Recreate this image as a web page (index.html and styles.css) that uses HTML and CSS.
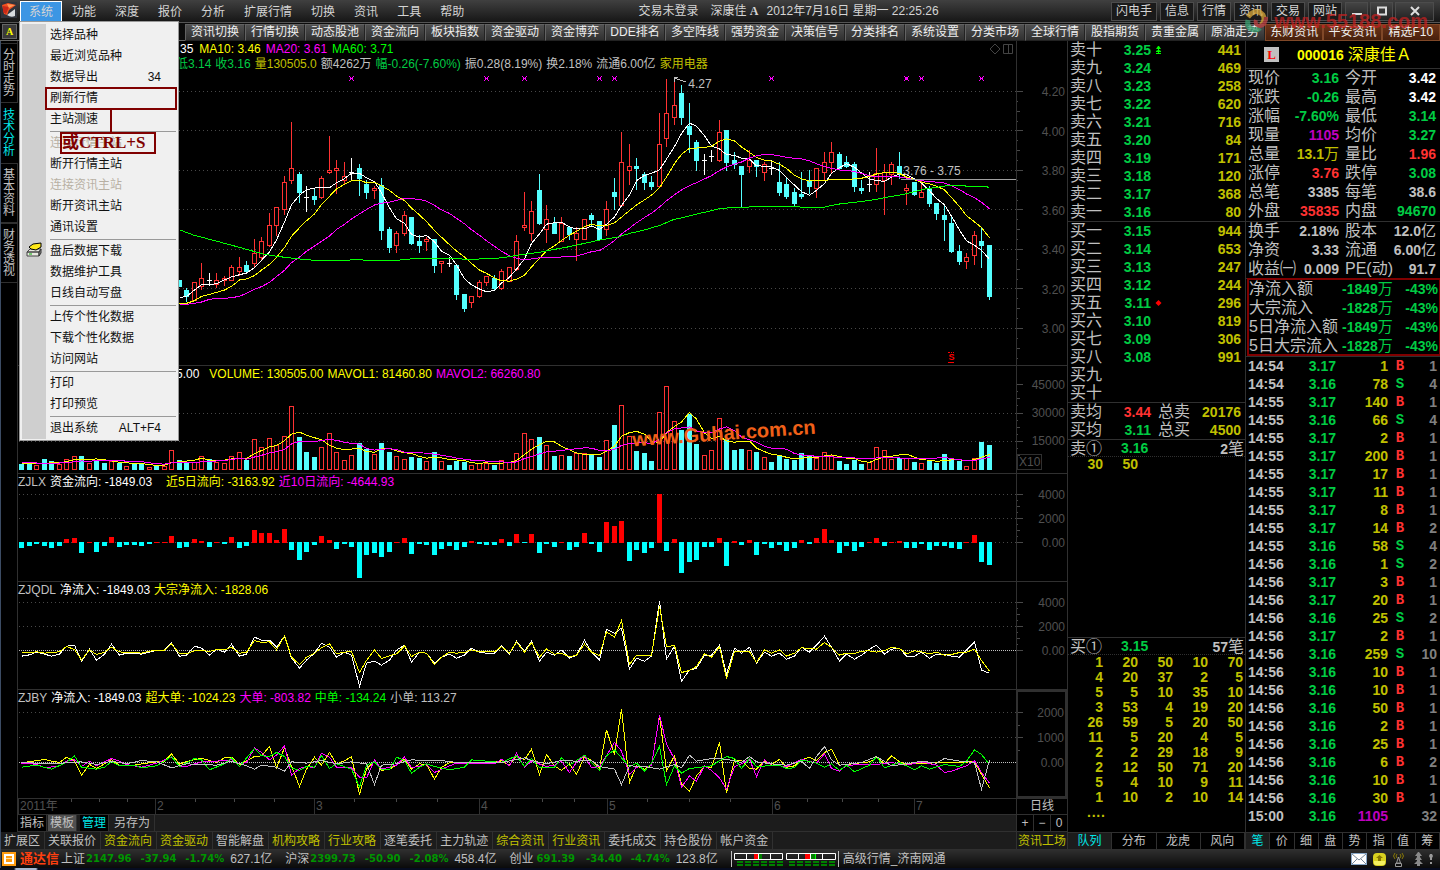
FILE: index.html
```html
<!DOCTYPE html>
<html lang="zh-CN">
<head>
<meta charset="utf-8">
<title>深康佳A 000016</title>
<link rel="stylesheet" href="styles.css">
</head>
<body>
<header class="titlebar">
  <svg class="app-logo" viewBox="0 0 16 16"><rect width="16" height="16" fill="#30343c"/><path d="M6 13L14 7V14Q10 16 6 13Z" fill="#d8dcdf"/><path d="M1 3L7 1L15 3L8 8L6 13L3 12Z" fill="#f05020"/><path d="M2 4L8 5L5 12L2 10Z" fill="#c82818"/><path d="M6 2L14 3L8 6Z" fill="#ff9858"/></svg>
  <nav class="menubar">
    <button class="menu-btn is-open">系统</button><button class="menu-btn">功能</button><button class="menu-btn">深度</button><button class="menu-btn">报价</button><button class="menu-btn">分析</button><button class="menu-btn">扩展行情</button><button class="menu-btn">切换</button><button class="menu-btn">资讯</button><button class="menu-btn">工具</button><button class="menu-btn">帮助</button>
  </nav>
  <div class="title-text"><span class="login">交易未登录</span><span>深康佳 <b>A</b></span><span>2012年7月16日 星期一 22:25:26</span></div>
  <div class="title-actions">
    <button class="quick">闪电手</button><button class="quick">信息</button><button class="quick">行情</button><button class="quick">资讯</button><button class="quick">交易</button><button class="quick">网站</button>
    <button class="win" aria-label="最小化"><svg viewBox="0 0 12 12"><path d="M1 8h10v2H1z" fill="#ddd"/></svg></button>
    <button class="win" aria-label="最大化"><svg viewBox="0 0 12 12"><path d="M2 2.500h8v7H2z" fill="none" stroke="#ddd" stroke-width="2"/></svg></button>
    <button class="win win-close" aria-label="关闭"><svg viewBox="0 0 12 12"><path d="M2 2l8 8M10 2l-8 8" stroke="#ddd" stroke-width="2"/></svg></button>
  </div>
</header>
<div class="toolbar">
  <button class="tool-a">A</button>
  <div class="tools">
    <button>资讯切换</button><button>行情切换</button><button>动态股池</button><button>资金流向</button><button>板块指数</button><button>资金驱动</button><button>资金博弈</button><button>DDE排名</button><button>多空阵线</button><button>强势资金</button><button>决策信号</button><button>分类排名</button><button>系统设置</button><button>分类市场</button><button>全球行情</button><button>股指期货</button><button>贵重金属</button><button>原油走势</button>
  </div>
  <div class="tools tools-hot"><button>东财资讯</button><button>平安资讯</button><button>精选F10</button></div>
</div>

<main class="workspace">
  <section class="left">
    <div class="left-body">
      <nav class="side-tabs">
        <button>分时走势</button><button class="is-active">技术分析</button><button>基本资料</button><button>财务透视</button>
      </nav>
      <div class="charts">
        <div class="panel panel-price">
          <svg class="plot" id="price" viewBox="0 0 998 324" preserveAspectRatio="none"></svg>
          <div class="head head-price">
            <p class="line-ma"><span class="w">35</span><span class="y">MA10: 3.46</span><span class="m">MA20: 3.61</span><span class="g">MA60: 3.71</span></p>
            <p class="line-info"><span class="dg">低3.14</span><span class="dg">收3.16</span><span class="dy">量130505.0</span><span>额4262万</span><span class="dg">幅-0.26(-7.60%)</span><span>振0.28(8.19%)</span><span>换2.18%</span><span>流通6.00亿</span><span class="dy">家用电器</span></p>
          </div>
          <svg class="panel-icons" viewBox="0 0 26 12"><path d="M6 1l5 5-5 5-5-5zM14.500 1.500h9v9h-9zM19.500 1.500v9" fill="none" stroke="#444"/></svg>
          <span class="note note-high">4.27</span>
          <span class="note note-gap">3.76 - 3.75</span>
          <span class="note note-s">S</span>
          <div class="axis"><span>4.20</span><span>4.00</span><span>3.80</span><span>3.60</span><span>3.40</span><span>3.20</span><span>3.00</span></div>
        </div>
        <div class="panel panel-vol">
          <svg class="plot" id="volume" viewBox="0 0 998 107" preserveAspectRatio="none"></svg>
          <div class="head head-vol"><span class="w">5.00</span><span class="y">VOLUME: 130505.00</span><span class="y">MAVOL1: 81460.80</span><span class="m">MAVOL2: 66260.80</span></div>
          <span class="guhai">www.Guhai.com.cn</span>
          <div class="axis"><span>45000</span><span>30000</span><span>15000</span><span class="unit">X10</span></div>
        </div>
        <div class="panel panel-flow">
          <svg class="plot" id="flow" viewBox="0 0 998 107" preserveAspectRatio="none"></svg>
          <div class="head"><span>ZJLX</span><span class="w wide">资金流向: -1849.03</span><span class="y">近5日流向: -3163.92</span><span class="m">近10日流向: -4644.93</span></div>
          <div class="axis"><span>4000</span><span>2000</span><span>0.00</span></div>
        </div>
        <div class="panel panel-flow">
          <svg class="plot" id="big" viewBox="0 0 998 107" preserveAspectRatio="none"></svg>
          <div class="head"><span>ZJQDL</span><span class="w">净流入: -1849.03</span><span class="y">大宗净流入: -1828.06</span></div>
          <div class="axis"><span>4000</span><span>2000</span><span>0.00</span></div>
        </div>
        <div class="panel panel-orders">
          <svg class="plot" id="orders" viewBox="0 0 998 108" preserveAspectRatio="none"></svg>
          <div class="head"><span>ZJBY</span><span class="w">净流入: -1849.03</span><span class="y">超大单: -1024.23</span><span class="m">大单: -803.82</span><span class="g">中单: -134.24</span><span>小单: 113.27</span></div>
          <div class="axis axis-boxed"><span>2000</span><span>1000</span><span>0.00</span></div>
        </div>
        <div class="timeline">
          <svg class="plot" id="ticks" viewBox="0 0 998 15" preserveAspectRatio="none"></svg>
          <div class="months"><span>2011年</span><span>2</span><span>3</span><span>4</span><span>5</span><span>6</span><span>7</span></div>
          <button class="period">日线</button>
        </div>
        <div class="indicator-bar">
          <div class="indicator-tabs"><button>指标</button><button class="is-grey">模板</button><button class="is-cyan">管理</button><button class="save">另存为</button></div>
          <div class="zoomers"><button>+</button><button>−</button><button>0</button></div>
        </div>
      </div>
    </div>
    <div class="page-bar">
      <nav class="page-tabs"><button>扩展区</button><button>关联报价</button><button class="dy">资金流向</button><button class="dy">资金驱动</button><button>智能解盘</button><button class="dy">机构攻略</button><button class="dy">行业攻略</button><button>逐笔委托</button><button>主力轨迹</button><button class="dy">综合资讯</button><button class="dy">行业资讯</button><button>委托成交</button><button>持仓股份</button><button>帐户资金</button></nav>
      <button class="factory">资讯工场</button>
    </div>
  </section>

  <section class="book">
    <table class="levels" id="asks"></table>
    <table class="levels ruled" id="bids"></table>
    <table class="averages ruled">
      <tr><th>卖均</th><td class="red">3.44</td><th class="second">总卖</th><td>20176</td></tr>
      <tr><th>买均</th><td class="dg">3.11</td><th class="second">总买</th><td>4500</td></tr>
    </table>
    <div class="queue-head ruled"><span>卖①</span><b class="dg">3.16</b><span class="count"><b>2</b>笔</span></div>
    <table class="queue"><tr><td>30</td><td>50</td><td></td><td></td><td></td></tr></table>
    <div class="filler"></div>
    <div class="queue-head ruled"><span>买①</span><b class="dg">3.15</b><span class="count"><b>57</b>笔</span></div>
    <table class="queue" id="bidQueue"></table>
    <div class="more">····</div>
    <nav class="bottom-tabs"><button class="is-active">队列</button><button>分布</button><button>龙虎</button><button>风向</button></nav>
  </section>

  <section class="quote">
    <h1><span class="flag">L</span><b>000016</b><span>深康佳Ａ</span></h1>
    <table class="facts ruled" id="facts"></table>
    <table class="facts ruled" id="facts2"></table>
    <div class="flow-wrap ruled"><table class="inflow">
      <tr><th>净流入额</th><td>-1849<i>万</i></td><td>-43%</td></tr>
      <tr><th>大宗流入</th><td>-1828<i>万</i></td><td>-43%</td></tr>
      <tr><th>5日净流入额</th><td>-1849<i>万</i></td><td>-43%</td></tr>
      <tr><th>5日大宗流入</th><td>-1828<i>万</i></td><td>-43%</td></tr>
    </table></div>
    <table class="trades ruled" id="trades"></table>
    <nav class="bottom-tabs bottom-tabs-narrow"><button class="is-active">笔</button><button>价</button><button>细</button><button>盘</button><button>势</button><button>指</button><button>值</button><button>筹</button></nav>
  </section>
</main>

<footer class="status">
  <svg class="status-logo" viewBox="0 0 14 14"><rect width="14" height="14" fill="#ff9c10"/><rect x="3" y="3" width="8" height="8" fill="none" stroke="#fff" stroke-width="2"/><path d="M4 6.500h6" stroke="#ffe0a0"/></svg>
  <strong class="brand">通达信</strong>
  <p class="index"><span>上证</span><b>2147.96</b><b>-37.94</b><b>-1.74%</b><span class="amount">627.1亿</span></p>
  <p class="index"><span>沪深</span><b>2399.73</b><b>-50.90</b><b>-2.08%</b><span class="amount">458.4亿</span></p>
  <p class="index"><span>创业</span><b class="narrow">691.39</b><b>-34.40</b><b>-4.74%</b><span class="amount">123.8亿</span></p>
  <svg class="gauge" viewBox="0 0 104 16"><g fill="none" stroke="#fff"><path d="M1.500 2.500h48v6h-48zM13.500 2v6M25.500 2v6M37.500 2v6M53.500 2.500h49v6h-49zM65.500 2v6M77.500 2v6M89.500 2v6"/></g><path d="M21 3h4v5h-4zM72 3h5v5h-5z" fill="#f00"/><path d="M26 3h3v5h-3zM78 3h4v5h-4z" fill="#008000"/><path d="M82 3h1v5h-1z" fill="#0f0"/><path d="M4 11h46M4 14h46M56 11h47M56 14h47" stroke="#008000" stroke-width="2" stroke-dasharray="6 2"/></svg>
  <span class="server">高级行情_济南网通</span>
  <div class="tray">
    <svg width="16" height="12" viewBox="0 0 16 12"><rect x=".5" y=".5" width="15" height="11" fill="#fff" stroke="#88a8c8"/><path d="M1 1l7 6 7-6M1 11l5-5M15 11l-5-5" fill="none" stroke="#789"/></svg>
    <svg width="13" height="13" viewBox="0 0 13 13"><rect width="13" height="13" rx="4" fill="#d8d020"/><path d="M1 8v2q0 2 3 2h5q3 0 3-2V8" fill="#f4f060"/><path d="M6.500 2L10 5H8v3H5V5H3z" fill="#887800"/></svg>
    <svg width="13" height="17" viewBox="0 0 13 17"><path d="M3 2Q0 5 3 8M5 3Q3 5 5 7M10 2q3 3 0 6M8 3q2 2 0 4" fill="none" stroke="#887808"/><path d="M6.500 6L4.500 12h4zM3.500 12.500h6v3h-6z" fill="none" stroke="#999"/></svg>
    <svg width="9" height="14" viewBox="0 0 9 14"><path d="M4 0h1l3 4H6v1l2 3H6v1l3 3H6v2H3v-2H0l3-3V8H1l2-3V4H1z" fill="#8a8a8a"/></svg>
    <svg width="4" height="10" viewBox="0 0 4 10"><path d="M1 0h2l1 2-1 2v2H1V4L0 2zM1 8h2v2H1z" fill="#999"/></svg>
  </div>
</footer>
<div class="taskbar"></div>

<div class="menu" role="menu">
  <div class="menu-gutter"><svg class="disk" viewBox="0 0 16 16"><path d="M1 10l3-3h11l-2 3zM1 10h12v4H1z" fill="#e8e8e0" stroke="#444"/><path d="M13 10l2-3v4l-2 3z" fill="#888" stroke="#333"/><path d="M3 5l4-3 8-1v4L10 8 5 7z" fill="#ffe818" stroke="#000"/><path d="M3 12h3" stroke="#0a0"/></svg></div>
  <div class="menu-list">
    <button role="menuitem">选择品种</button>
    <button role="menuitem">最近浏览品种</button>
    <button role="menuitem">数据导出<kbd>34</kbd></button>
    <button role="menuitem" class="marked">刷新行情</button>
    <button role="menuitem">主站测速</button>
    <hr>
    <button role="menuitem" class="off" disabled>连接行情主站</button>
    <button role="menuitem">断开行情主站</button>
    <button role="menuitem" class="off" disabled>连接资讯主站</button>
    <button role="menuitem">断开资讯主站</button>
    <button role="menuitem">通讯设置</button>
    <hr>
    <button role="menuitem">盘后数据下载</button>
    <button role="menuitem">数据维护工具</button>
    <button role="menuitem">日线自动写盘</button>
    <hr>
    <button role="menuitem">上传个性化数据</button>
    <button role="menuitem">下载个性化数据</button>
    <button role="menuitem">访问网站</button>
    <hr>
    <button role="menuitem">打印</button>
    <button role="menuitem">打印预览</button>
    <hr>
    <button role="menuitem">退出系统<kbd>ALT+F4</kbd></button>
  </div>
  <span class="callout-line"></span>
  <span class="callout">或CTRL+S</span>
</div>

<div class="watermark">
  <svg viewBox="0 0 26 26" fill="none" stroke-width="5"><path d="M4 9Q12-1 19 7Q22 12 17 17" stroke="#d8a838"/><path d="M4 12Q2 21 11 22Q14 22 16 20" stroke="#38a070"/><path d="M12 12Q10 17 16 18Q22 17 22 9" stroke="#c04040" stroke-width="4"/></svg>
  <span>www.55188.com</span>
</div>
<script src="chart.js"></script>
</body>
</html>
```

FILE: styles.css
```css
* { box-sizing: border-box; }
body {
  margin: 0; min-height: 100vh; display: flex; flex-direction: column; position: relative;
  background: #000; color: #c0c0c0; overflow-x: hidden;
  font: 12px/16px "Liberation Sans", "Noto Sans CJK SC", sans-serif;
}
button { font: inherit; color: inherit; background: none; border: 0; padding: 0; margin: 0; white-space: nowrap; text-align: center; }
p, h1 { margin: 0; font-size: inherit; font-weight: normal; }
table { border-collapse: collapse; table-layout: fixed; width: 100%; }
th, td { padding: 0; }
svg { display: block; }

.w { color: #fff; }
.y { color: #ff0; }
.m { color: #f0f; }
.g { color: #0f0; }
.dg { color: #00cc44; }
.dy { color: #c0c000; }
.red { color: #ff3232; }
.purple { color: #c000c0; }

/* title bar */
.titlebar { display: flex; align-items: center; height: 22px; background: linear-gradient(#404040, #161616); color: #d4d4d4; }
.app-logo { width: 16px; height: 16px; margin: 0 3px 3px 1px; }
.menubar { display: flex; align-self: stretch; }
.menu-btn { padding: 2px 9px 0; margin-right: 1px; height: 21px; }
.menu-btn.is-open { background: #3c96e4; border: 1px solid #fff; border-bottom: 0; padding: 1px 8px 0; margin-top: 1px; height: 20px; }
.title-text { display: flex; gap: 8px; flex: 1; justify-content: center; white-space: nowrap; padding-right: 8px; }
.login { margin-right: 4px; }
.title-text b { font-family: "Liberation Serif", serif; }
.title-actions { display: flex; gap: 2px; padding-right: 6px; }
.quick { height: 19px; padding: 0 4px; border: 1px solid #4c4c4c; background: #1a1a1a; margin-right: 1px; }
.win { width: 23px; height: 19px; display: grid; place-items: center; border: 1px solid #4c4c4c; background: linear-gradient(#444, #222); }
.win svg { width: 12px; height: 12px; }
.win-close { width: 39px; }

/* shortcut bar */
.toolbar { display: flex; align-items: stretch; height: 19px; padding: 1px 0 1px 2px; background: #0c0c0c; border-top: 1px solid #555; border-bottom: 1px solid #666; color: #eee; }
.tool-a { width: 15px; margin-right: 168px; background: #3a3a3a; border: 1px solid #666; color: #ff0; font: bold 10px/12px "Liberation Serif", serif; }
.tools { display: grid; grid-auto-flow: column; grid-auto-columns: 1fr; flex: 1080; }
.tools button { line-height: 15px; background: linear-gradient(#505050, #303030); border: 1px solid #626262; border-right-color: #222; border-bottom-color: #222; }
.tools-hot { flex: 175; }
.tools-hot button { background: linear-gradient(#6c3418, #48200c); border-color: #804828; }

.workspace { flex: 1; display: grid; grid-template-columns: minmax(0, 1068fr) 178px 194px; }
.left { display: flex; flex-direction: column; min-width: 0; border-left: 1px solid #3c4c64; border-right: 1px solid #303030; }
.left-body { flex: 1; display: flex; min-height: 0; }

.side-tabs { width: 17px; border-right: 1px solid #303030; display: flex; flex-direction: column; padding-top: 2px; }
.side-tabs button { white-space: normal; width: 17px; height: 60px; padding: 0 2px; line-height: 12px; border: 1px solid #303030; border-left: 0; }
.side-tabs .is-active { color: #00e8e8; border-color: #000; }

/* chart panels */
.charts { flex: 1; min-width: 0; display: grid; grid-template-rows: 325fr 108fr 108fr 108fr 109fr 16px 17px; }
.panel { display: grid; position: relative; grid-template: minmax(0, 1fr) / minmax(0, 1fr) 51px; border-bottom: 1px solid #303030; min-height: 0; }
.plot { grid-area: 1 / 1; width: 100%; height: 100%; min-height: 0; overflow: visible; shape-rendering: crispEdges; }
.head { grid-area: 1 / 1; display: flex; gap: 4px; z-index: 1; white-space: nowrap; height: 16px; }
.head-price { display: block; }
.head-price p { display: flex; gap: 4px; height: 15px; }
.line-ma { padding-left: 162px; }
.line-ma span:first-child { margin-right: 2px; }
.line-ma span { margin-right: 1px; }
.line-info { padding-left: 158px; }
.head-vol { padding-left: 158px; }
.head-vol span:first-child { margin-right: 6px; }
.wide { margin-right: 10px; }
.axis { grid-area: 1 / 2; border-left: 1px solid #303030; display: flex; flex-direction: column; justify-content: space-between; align-items: flex-end; padding-right: 2px; color: #505050; line-height: 14px; }
.panel-price .axis { padding-top: 44px; padding-bottom: 29px; }
.panel-vol .axis { padding-top: 12px; padding-bottom: 3px; }
.panel-flow .axis { padding-top: 14px; padding-bottom: 31px; }
.panel-orders .axis { padding-top: 14px; padding-bottom: 26px; }
.axis-boxed { border: 2px solid #303030; padding-right: 1px; }
.unit { align-self: flex-start; border: 1px solid #303030; padding: 0 1px; margin-top: -8px; }
.panel-icons { position: absolute; top: 2px; right: 52px; width: 26px; height: 12px; }
.note { position: absolute; line-height: 14px; }
.note-high { left: 63.900%; top: 11%; }
.note-gap { left: 84.400%; top: 38%; }
.note-s { left: 88.700%; top: 96%; color: #f00; font: bold 9px/9px "Liberation Sans", sans-serif; border-bottom: 1px solid #f00; border-top: 1px dotted #f00; }
.guhai { position: absolute; left: 58.500%; top: 51%; color: #f06018; font: bold 20px/24px "Liberation Sans", sans-serif; transform: rotate(-4deg); z-index: 2; }

.timeline { display: grid; grid-template: minmax(0, 1fr) / minmax(0, 1fr) 51px; border-bottom: 1px solid #303030; line-height: 15px; }
.months { grid-area: 1 / 1; display: grid; grid-template-columns: 137fr 159fr 165fr 128fr 165fr 142fr 102fr; color: #505050; }
.months span { border-left: 1px solid #303030; padding-left: 1px; }
.period { border-left: 1px solid #303030; line-height: 15px; }
.indicator-bar { display: grid; grid-template-columns: minmax(0, 1fr) 51px; border-bottom: 1px solid #303030; background: #1c1c1c; }
.indicator-tabs { display: flex; }
.indicator-tabs button { padding: 0 2px; border-right: 1px solid #303030; background: #000; margin-right: 1px; }
.indicator-tabs .is-grey { background: #505050; margin-right: 3px; }
.indicator-tabs .is-cyan { color: #00e8e8; }
.indicator-tabs .save { background: none; padding: 0 4px; }
.zoomers { display: grid; grid-template-columns: repeat(3, 1fr); background: #000; }
.zoomers button { border-left: 1px solid #303030; }

.page-bar { height: 17px; display: grid; grid-template-columns: minmax(0, 1fr) 51px; }
.page-tabs { display: flex; background: #1c1c1c; }
.page-tabs button { padding: 0 4px 0 3px; border-right: 1px solid #303030; }
.factory { background: #181818; border-left: 1px solid #303030; color: #c0c000; }

/* order book */
.book { display: flex; flex-direction: column; border-right: 1px solid #303030; }
.ruled { border-top: 1px solid #303030; }
.book th, .quote th { font: 16px/18px "Liberation Sans", "Noto Sans CJK SC", sans-serif; text-align: left; white-space: nowrap; }
.book td, .quote td { font-weight: bold; font-size: 14px; line-height: 18px; text-align: right; white-space: nowrap; }
.levels tr, .averages tr, .trades tr { height: 18px; }
.levels th, .averages th { padding-left: 2px; }
.levels td:last-child, .averages td:last-child { color: #c0c000; padding-right: 4px; }
.levels .l { width: 51px; }
.levels .p, .averages td:nth-child(2) { width: 32px; }
.averages th { width: 51px; }
.averages .second { width: 42px; padding-left: 7px; }
.levels .mark svg { width: 7px; height: 8px; margin-left: 4px; }
.queue-head { display: flex; height: 18px; padding: 0 1px 0 2px; font-size: 16px; line-height: 17px; border-bottom: 1px dotted #303030; white-space: nowrap; }
.queue-head b { font-size: 14px; }
.queue-head > b { margin-left: 19px; }
.count { margin-left: auto; }
.queue { width: 175px; }
.queue td { line-height: 15px; height: 15px; color: #c0c000; }
.filler { flex: 1; }
.more { height: 27px; padding-left: 19px; color: #c0c000; font: bold 14px/22px "Liberation Sans", sans-serif; }
.bottom-tabs { display: grid; grid-template-columns: repeat(4, 1fr); height: 17px; border-top: 1px solid #303030; }
.bottom-tabs button { border-right: 1px solid #303030; line-height: 16px; }
.bottom-tabs .is-active { color: #00e8e8; background: #1c1c1c; }
.bottom-tabs-narrow { grid-template-columns: repeat(8, 1fr); margin-top: auto; }

/* quote */
.quote { display: flex; flex-direction: column; min-width: 0; }
.quote h1 { height: 27px; display: flex; align-items: center; padding-left: 18px; color: #ff0; font-size: 16px; }
.quote h1 b { font-size: 14px; margin: 0 4px 0 18px; }
.flag { width: 15px; height: 15px; background: #c0c0c0; color: #f00; text-align: center; font: bold 13px/15px "Liberation Serif", serif; }
.facts tr, .inflow tr { height: 19px; }
.facts th { padding-left: 2px; width: 44px; }
.facts td { padding-right: 4px; }
.facts th:nth-child(3) { width: 46px; }
.facts i, .inflow i { font-style: normal; font-weight: normal; font-size: 15px; }
.facts .fcol { width: 53px; }
.flow-wrap { padding: 0 0 1px 2px; }
.inflow { outline: 2px solid #800000; outline-offset: -1px; }
.inflow th { width: 94px; padding-left: 1px; }
.inflow td { color: #00cc44; }
.inflow td:last-child { padding-right: 2px; }
.trades td:nth-child(1) { text-align: left; padding-left: 2px; width: 46px; }
.trades td:nth-child(2) { width: 44px; color: #00cc44; }
.trades td:nth-child(3) { width: 52px; color: #c0c000; }
.trades td:nth-child(4) { width: 20px; text-align: center; font-family: "Liberation Mono", monospace; padding-left: 4px; }
.trades td:nth-child(5) { color: #808080; padding-right: 3px; }
.trades td.purple:nth-child(3) { color: #c000c0; }
.trades .B { color: #ff3232; }
.trades .S { color: #00cc44; }

/* status */
.status { display: flex; align-items: center; height: 19px; padding-top: 1px; background: linear-gradient(#303030, #0a0a0a); white-space: nowrap; border-left: 1px solid #3c4c64; }
.status-logo { width: 14px; height: 14px; margin: 0 4px 0 1px; }
.brand { color: #ff4010; font-size: 13px; margin-right: 2px; }
.index { display: flex; align-items: center; margin-right: 13px; }
.index b { font: bold 10px/16px "DejaVu Sans", sans-serif; color: #009400; margin-right: 8px; margin-left: 1px; }
.index b:nth-of-type(3) { margin-right: 6px; }
.index .narrow { margin-left: 3px; margin-right: 10px; }
.gauge { width: 108px; height: 16px; border-left: 1px solid #c0c0c0; border-right: 1px solid #c0c0c0; padding: 0 1px; }
.server { padding-left: 4px; }
.tray { margin-left: auto; display: flex; align-items: center; gap: 6px; padding-right: 7px; }
.tray svg:nth-child(4) { margin-left: 3px; }
.taskbar { height: 2px; background: linear-gradient(90deg, #060c18 0 14px, #a8b8d0 16px 36px, #060c20 38px); }

/* system menu */
.menu { position: absolute; left: 19px; top: 21px; width: 160px; display: flex; padding: 2px 2px 1px; background: #f0f0f0; border: 1px solid #999; color: #111; font: 12px/21px "Liberation Sans", "Noto Sans CJK SC", sans-serif; z-index: 5; }
.menu-gutter { width: 24px; background: #cfcfcf; }
.disk { width: 16px; height: 16px; margin: 218px 0 0 4px; }
.menu-list { flex: 1; display: flex; flex-direction: column; padding-top: 1px; }
.menu-list button { display: flex; justify-content: space-between; height: 21px; line-height: 21px; padding: 0 15px 0 4px; }
.menu-list kbd { font: inherit; }
.menu-list hr { width: calc(100% - 4px); height: 1px; border: 0; background: #999; margin: 1px 0 1px 4px; }
.menu-list .off { color: #b8b0a4; }
.menu-list .marked { outline: 2px solid #800000; outline-offset: -1px; }
.callout-line { position: absolute; left: 90px; top: 87px; width: 2px; height: 24px; background: #800000; }
.callout { position: absolute; left: 40px; top: 110px; width: 96px; height: 22px; border: 2px solid #800000; color: #800000; font: bold 17px/17px "Liberation Serif", "Noto Sans CJK SC", serif; white-space: nowrap; }

.watermark { position: absolute; top: 8px; right: 12px; display: flex; align-items: center; gap: 4px; opacity: .75; pointer-events: none; color: #c02020; }
.watermark svg { width: 26px; height: 26px; }
.watermark span { font: bold 20px/24px "Liberation Sans", sans-serif; }
```

FILE: chart.js
```js
const NS = 'http://www.w3.org/2000/svg';
const RED = '#ff3232', CYAN = '#54ffff';
const LEFT = 18;

function add(svg, tag, attrs) {
  const el = document.createElementNS(NS, tag);
  for (const k in attrs) el.setAttribute(k, attrs[k]);
  svg.appendChild(el);
  return el;
}
const byId = id => document.getElementById(id);
const cx = i => Math.round(21 + 7.5 * i) - LEFT;
const rect = (svg, x, y, w, h, fill) => add(svg, 'rect', { x, y, width: w, height: h, fill });
const hollow = (svg, x, y, w, h) => add(svg, 'rect', { x: x + .5, y: y + .5, width: w - 1, height: Math.max(1, h - 1), fill: '#000', stroke: RED });
function line(svg, points, stroke) {
  add(svg, 'polyline', { points: points.map(p => p.join(',')).join(' '), fill: 'none', stroke });
}
function gridLine(svg, y, color = '#484848', dash = '1 3') {
  add(svg, 'path', { d: `M1 ${y + .5}H998`, stroke: color, 'stroke-dasharray': dash });
}
function ticks(svg, major, step) {
  major.forEach(y => {
    rect(svg, 998, y, 7, 1, '#484848');
    [1, 2, 3].forEach(k => rect(svg, 998, Math.round(y + step * k / 4), k === 2 ? 4 : 2, 1, '#484848'));
  });
}
const avg = (values, n, seed) => values.map((_, i) =>
  i < seed.length ? seed[i] : values.slice(i - n + 1, i + 1).reduce((a, b) => a + b, 0) / n);

/* kind, body top, body bottom, high, low; thirds of a pixel below y=60 */
const candles = `c660,680,660,680 c690,710,684,728 r667,721,667,721 r655,680,609,692 w661,661,639,680 r661,673,640,686 r655,661,649,680 r622,661,615,661 r622,634,591,650 c615,636,603,640
r580,610,537,622 r544,592,531,600 r496,556,459,562 r442,496,442,528 r367,448,348,467 r325,361,186,374 c342,398,336,431 w412,412,378,456 c408,419,387,437 r355,412,348,419
r331,338,228,344 r325,332,300,404 r349,362,306,372 w338,338,294,360 c324,356,312,410 c372,398,360,419 r385,391,378,419 c377,515,354,540 c507,563,501,581 r520,556,513,581
r466,520,453,528 c471,551,471,557 c543,557,525,581 r538,544,531,575 c537,617,537,641 r604,610,604,641 w610,610,591,623 c615,704,615,722 c702,746,702,758 r709,727,709,746
r667,709,660,716 r650,667,650,680 c654,686,645,690 r634,686,627,692 r622,664,622,667 r544,628,525,634 r496,502,396,515 r454,520,423,544 c390,491,342,497 r478,508,435,551
c489,521,471,521 r490,544,471,544 c501,524,501,540 r520,538,502,605 r478,538,478,538 c465,479,459,503 c483,540,483,540 r448,508,423,528 c396,410,354,450 r307,436,216,442
r319,331,252,375 c318,326,294,392 c342,368,336,392 c366,380,348,392 r253,380,159,386 r160,236,57,261 r136,173,57,195 c99,173,75,195 c198,224,129,279 c246,302,240,333
w301,301,282,345 w290,290,270,308 r217,301,180,308 c210,308,210,333 c300,314,276,327 c318,344,318,441 r301,319,270,339 c300,320,300,351 r313,338,307,363 w325,325,300,345
c366,398,306,410 c372,410,352,419 c396,431,384,441 c402,410,336,419 c360,380,330,404 r325,386,325,414 r307,337,276,363 r277,307,246,339 c282,326,276,326 c306,320,288,326
c312,380,306,398 c384,392,360,404 w373,373,336,398 r340,374,264,398 r338,361,312,467 r313,344,306,375 c318,344,276,357 r385,391,372,437 c366,404,366,410 r397,412,363,412
c387,431,378,443 c429,461,429,480 c465,480,435,545 c489,575,471,581 c573,605,555,617 r592,605,579,629 r526,587,513,617 c543,557,503,624 c555,710,555,722`
  .split(/\s+/).map(s => [s[0], ...s.slice(1).split(',').map(Number)]);
const FIRST = 21;

(function drawPrice() {
  const svg = byId('price');
  const y = v => v / 3 + 19, f = v => Math.floor(v / 3) + 19;
  const grid = [50, 89, 129, 168, 208, 247, 287];
  grid.forEach(g => gridLine(svg, g));
  ticks(svg, grid, 39.5);
  candles.forEach(([kind, top, bottom, high, low], k) => {
    const x = cx(k + FIRST);
    const color = { r: RED, c: CYAN, w: '#fff' }[kind];
    rect(svg, x, f(high), 1, Math.max(1, f(low) - f(high)), color);
    if (kind === 'r') hollow(svg, x - 2, f(top), 5, f(bottom) - f(top) + 1);
    else if (kind === 'c') rect(svg, x - 2, f(top), 5, Math.round((bottom - top) / 3), color);
    else rect(svg, x - 2, f(top), 5, 1, color);
  });
  const close = candles.map(c => c[0] === 'c' ? c[2] : c[1]);
  const pts = list => list.map((v, k) => [cx(k + FIRST) + .5, y(v)]);
  line(svg, pts(avg(close, 5, [712, 710, 690, 674])), '#fff');
  line(svg, pts(avg(close, 10, [731, 730, 722, 709, 703, 697, 690, 679, 660])), '#ff0');
  line(svg, pts(avg(close, 20, [733, 733, 730, 726, 718, 715, 715, 713, 709, 700, 688, 680, 667, 650, 631, 608, 591, 574, 558, 544])), '#f0f');
  const ma60 = [0,510,40,525,100,541,160,557,210,571,250,582,290,589,360,597,424,603,445,601,500,601,530,598,560,601,600,601,628,603,650,601,710,595,800,595,870,598,950,595,990,590,1010,586,1078,577,1102,572,1168,560,1260,540,1310,532,1350,520,1390,511,1440,496,1480,479,1520,470,1560,460,1615,447,1660,442,1700,442,1720,439,1840,439,1860,441,1935,441,1970,433,2040,425,2090,418,2120,412,2170,403,2230,388,2310,376,2350,376,2360,379,2415,379,2426,382];
  const g = [];
  for (let i = 0; i < ma60.length; i += 2) g.push([162 + ma60[i] / 3, y(ma60[i + 1])]);
  line(svg, g, '#0f0');
  [44, 62, 67, 77, 79, 100, 118, 120, 128].forEach(i => {
    const x = cx(i), m = '#f0f';
    [-2, -1, 1, 2].forEach(d => {
      rect(svg, x + d, 37 + d, 1, 1, m);
      rect(svg, x + d, 37 - d, 1, 1, m);
    });
    rect(svg, x - 1, 37, 3, 1, m);
    if (i === 118) rect(svg, x - 1, 36, 3, 3, m);
  });
  add(svg, 'path', { d: 'M656 37l12 4M656 36h4M656 37v4', stroke: '#c0c0c0', fill: 'none' });
  rect(svg, 883, 138, 115, 1, '#a0a0a0');
})();

const volumes = `17c 19c 14r 32c 26c 19r 34r 43r 41c 22r 26c 20c 28r 20c 13r 18c 18c 10r 11c 13r 61r 29c 20c 25r 43r 33c 25r 22r 43r 55r 30c 94r 70r 97r 76r 103r 193r 98c 53c 38c 70r 112r 55r 31r 46r 80c 62c 49r 80c 53c 43r 34r 38c 35c 28r 53c 28r 14c 27c 23c 16r 21r 21r 14c 31r 24r 52r 112r 94r 98c 76r 41c 46r 41c 52r 52r 46c 38c 91r 134c 196r 103r 56c 50c 26c 175r 253r 148r 119c 167c 77c 46r 61r 157r 94c 59c 62c 61r 53c 40r 23c 43c 32c 29c 50c 41c 37r 55r 44r 26c 17c 29c 17c 25r 70r 61r 34r 37c 37r 23c 22r 29c 20c 47c 32c 26c 13r 37r 83c 74c`.split(' ');
(function drawVolume() {
  const svg = byId('volume');
  const grid = [18, 47, 75];
  grid.slice(1).forEach(g => gridLine(svg, g));
  ticks(svg, grid, 28.5);
  const h = volumes.map(v => parseInt(v, 10));
  volumes.forEach((v, i) => {
    const tall = Math.max(2, Math.round(h[i] / 3));
    if (v.endsWith('r')) hollow(svg, cx(i) - 2, 104 - tall, 5, tall);
    else rect(svg, cx(i) - 2, 104 - tall, 5, tall, CYAN);
  });
  const pts = list => list.map((v, i) => [cx(i) + .5, 104 - v / 3]);
  line(svg, pts(avg(h, 5, [20, 20, 20, 20])), '#ff0');
  line(svg, pts(avg(h, 10, [22, 22, 21, 21, 21, 21, 22, 25, 27])), '#f0f');
})();

const net = [-17,-13,-5,-11,-17,-11,13,16,-32,4,-29,-11,19,-14,-8,-8,-11,-5,1,1,22,-17,-14,13,7,-14,4,-5,19,-17,-11,40,31,31,10,43,-23,-53,-29,-8,22,10,-20,-5,-14,-107,-38,-32,-44,-29,1,16,-35,-5,-8,-38,-20,-11,-23,-14,7,-5,-8,-8,13,-11,28,-2,28,-32,-5,-14,1,-23,-14,31,-5,-29,64,52,67,-56,-23,-32,-17,148,-26,13,-92,-59,-53,-14,-14,16,-71,7,-8,10,-38,-5,-17,-8,-26,-17,10,-5,16,43,10,-32,-11,-26,-14,4,16,-11,4,7,-17,-17,-5,-23,-11,-11,-17,-20,1,25,-59,-68];
const block = [-6,-6,-4,-8,-6,-4,12,3,-28,2,-12,-5,10,-4,-6,-6,-8,-2,0,1,20,-10,-10,-1,0,-3,3,2,10,-8,-5,30,24,26,2,44,-20,-42,-20,-8,8,20,-10,-5,-3,-66,-30,2,-24,-16,-10,14,-18,-5,-8,-42,-20,-5,-8,-6,2,-4,-4,-4,12,-8,25,-5,24,-20,5,-11,-8,-19,-14,19,-5,-15,56,40,90,-42,-14,-16,-14,132,11,15,-66,-60,-48,-10,-20,12,-84,-2,-2,-4,-36,2,-8,2,-17,-8,8,6,4,24,9,-14,-8,-9,-2,-1,-5,0,9,6,-10,-1,-4,-10,-5,-14,-12,-6,-5,4,-30,-62];

(function drawFlow() {
  const svg = byId('flow');
  const grid = [20, 44, 68];
  grid.forEach(g => gridLine(svg, g));
  ticks(svg, grid.slice(0, 2), 24);
  rect(svg, 998, 68, 7, 1, '#484848');
  net.forEach((v, i) => {
    const h = Math.max(1, Math.round(Math.abs(v) / 3));
    rect(svg, cx(i) - 2, v > 0 ? 69 - h : 68, 5, h, v > 0 ? '#f00' : '#0ff');
  });
})();

(function drawBig() {
  const svg = byId('big');
  [20, 44].forEach(g => gridLine(svg, g));
  gridLine(svg, 68, '#c0c0c0', '1 1');
  ticks(svg, [20, 44], 24);
  rect(svg, 998, 68, 7, 1, '#484848');
  const pts = list => list.map((v, i) => [cx(i) + .5, 68.5 - v / 3]);
  line(svg, pts(net), '#fff');
  line(svg, pts(block), '#ff0');
})();

(function drawOrders() {
  const svg = byId('orders');
  [22, 47].forEach(g => gridLine(svg, g));
  gridLine(svg, 72, '#c0c0c0', '1 1');
  ticks(svg, [22, 47], 25);
  const series = {
    '#ff0': '0:-1,3:9,4:4,5:0,6:16,7:5,8:-38,9:-6,10:-18,12:8,13:-9,15:-8,16:-4,18:2,19:4,20:26,21:-5,22:3,24:13,26:0,27:14,28:16,29:-6,30:5,31:18,32:20,33:48,34:-16,35:44,36:-10,37:-72,38:-20,39:16,40:-8,41:30,42:-4,43:5,44:18,45:-96,46:-20,47:4,48:-24,49:-20,50:-8,51:10,52:-20,53:-4,54:-6,55:-50,56:-15,57:0,60:0,62:-3,64:5,65:-8,66:20,67:8,68:40,69:-36,70:24,71:-10,72:-24,73:-4,74:-36,75:18,76:6,77:-18,78:98,79:24,80:160,81:-60,82:-10,83:-20,84:-8,85:140,86:-24,87:20,88:-64,89:-86,90:-40,91:-12,92:-16,93:60,94:-92,95:8,96:6,97:-18,98:-20,99:4,100:-5,101:9,102:-14,103:-10,104:8,105:16,106:6,107:30,108:40,109:-8,110:-6,113:2,114:14,115:-3,116:20,117:2,118:-5,119:-3,127:2,128:-36,129:-76',
    '#f0f': '0:-3,2:-5,3:-16,5:-10,6:4,7:8,8:-12,9:4,10:-10,12:12,13:4,14:-6,16:-14,18:-2,20:16,21:-10,22:-12,24:2,26:4,28:8,29:-4,30:0,31:44,32:30,33:8,34:22,35:50,36:-38,37:-18,38:-12,39:-16,40:28,41:16,42:-14,44:-16,45:-44,46:-46,47:8,48:-20,50:-8,51:16,52:-16,54:-6,55:-30,56:-20,58:-2,63:-4,64:10,65:-10,66:28,67:-14,68:4,70:-12,71:-8,72:4,73:-30,74:0,75:20,76:-16,77:-12,78:20,79:60,80:34,81:-36,82:-14,84:-10,85:142,86:56,87:10,88:-74,89:-40,90:-56,91:-10,92:-24,93:-46,94:-80,95:-12,96:-4,97:10,98:-42,99:8,100:-8,102:-12,104:10,106:-2,107:26,108:-18,109:-26,110:-8,114:-6,116:0,118:-8,120:2,122:-8,123:-30,124:-26,126:-10,127:6,128:-30,129:-62',
    '#0f0': '0:-14,2:-8,4:-20,6:0,7:20,8:-14,10:-20,11:-14,12:2,13:-10,15:-8,16:-16,18:-10,20:18,21:-12,23:12,24:8,25:-22,27:-4,28:14,29:-12,31:42,32:20,33:18,34:30,35:18,36:-16,37:-24,38:-12,39:-14,40:20,41:-18,42:-4,44:-20,45:-74,46:-8,47:2,48:-22,49:-22,50:16,51:6,52:-32,53:-14,54:-4,55:-12,57:-22,59:-14,60:8,62:4,64:0,66:20,67:-12,68:12,69:-16,71:-14,72:14,73:-8,75:22,77:-24,78:20,79:38,80:14,81:-12,82:-2,83:-26,84:-2,85:48,86:-66,87:-10,88:-32,89:-18,92:-10,94:18,95:12,96:-18,97:12,98:-12,101:-8,102:-18,103:-16,104:8,106:-2,107:-14,108:-4,109:-24,110:-8,111:-28,113:-8,114:18,115:-16,117:0,119:-22,120:-10,121:-20,123:-6,125:-12,126:4,127:38,128:24,129:-6',
    '#c0c0c0': '0:0,4:-4,8:2,10:-6,12:4,14:-4,16:6,18:2,20:-16,22:-4,24:-6,26:-8,28:4,30:-10,31:-20,32:-8,34:-14,35:-26,36:2,38:-2,40:6,42:-4,44:2,46:-4,47:-66,48:-8,50:-4,52:8,54:6,56:6,58:0,64:0,67:14,68:6,70:-4,72:6,74:4,76:6,77:-12,79:-20,80:-66,81:-10,83:-12,85:-20,87:-6,88:-16,89:22,90:4,92:12,94:10,96:0,97:18,98:2,100:-4,102:-8,104:4,105:-18,106:18,107:48,108:8,109:-8,112:0,114:18,116:-10,118:-4,120:4,122:-2,123:12,125:4,127:0,128:-80,129:8'
  };
  for (const color in series) {
    line(svg, series[color].split(',').map(p => {
      const [i, v] = p.split(':').map(Number);
      return [cx(i) + .5, 72.5 - v / 3];
    }), color);
  }
})();

[71, 99, 127, 195, 234, 274, 354, 396, 437, 510, 542, 574, 647, 689, 730, 807, 842, 878]
  .forEach(x => rect(byId('ticks'), x - LEFT, 0, 1, 3, '#484848'));

/* tables */
const numerals = ['一', '二', '三', '四', '五', '六', '七', '八', '九', '十'];
const up = '<svg viewBox="0 0 7 8"><path d="M3 0h1l2 3H4v1l2 1v1H4v1h2v1H1V7h2V6H1V5l2-1V3H1z" fill="#0f0"/></svg>';
const dot = '<svg viewBox="0 0 7 8"><path d="M3.500 1L6.500 4l-3 3-3-3z" fill="#f00"/></svg>';
function levels(id, side, names, prices, sizes, marks) {
  byId(id).innerHTML = names.map((n, i) =>
    `<tr><th class="l">${side}${n}</th><td class="p dg">${prices[i] || ''}</td><td class="mark">${marks[i] || ''}</td><td>${sizes[i] || ''}</td></tr>`).join('');
}
levels('asks', '卖', numerals.slice().reverse(),
  ['3.25', '3.24', '3.23', '3.22', '3.21', '3.20', '3.19', '3.18', '3.17', '3.16'],
  [441, 469, 258, 620, 716, 84, 171, 120, 368, 80], { 0: up });
levels('bids', '买', numerals,
  ['3.15', '3.14', '3.13', '3.12', '3.11', '3.10', '3.09', '3.08'],
  [944, 653, 247, 244, 296, 819, 306, 991], { 4: dot });

byId('bidQueue').innerHTML = ['1 20 50 10 70', '4 20 37 2 5', '5 5 10 35 10', '3 53 4 19 20', '26 59 5 20 50', '11 5 20 4 5', '2 2 29 18 9', '2 12 50 71 20', '5 4 10 9 11', '1 10 2 10 14']
  .map(r => '<tr>' + r.split(' ').map(c => `<td>${c}</td>`).join('') + '</tr>').join('');

const facts = (id, rows) => {
  byId(id).innerHTML = rows.map(([a, b, bc, c, d, dc]) =>
    `<tr><th>${a}</th><td class="fcol ${bc}">${b}</td><th>${c}</th><td class="${dc}">${d}</td></tr>`).join('');
};
facts('facts', [
  ['现价', '3.16', 'dg', '今开', '3.42', 'w'],
  ['涨跌', '-0.26', 'dg', '最高', '3.42', 'w'],
  ['涨幅', '-7.60%', 'dg', '最低', '3.14', 'dg'],
  ['现量', '1105', 'purple', '均价', '3.27', 'dg'],
  ['总量', '13.1<i>万</i>', 'dy', '量比', '1.96', 'red'],
  ['涨停', '3.76', 'red', '跌停', '3.08', 'dg'],
  ['总笔', '3385', '', '每笔', '38.6', ''],
  ['外盘', '35835', 'red', '内盘', '94670', 'dg']
]);
facts('facts2', [
  ['换手', '2.18%', '', '股本', '12.0<i>亿</i>', ''],
  ['净资', '3.33', '', '流通', '6.00<i>亿</i>', ''],
  ['收益㈠', '0.009', '', 'PE(动)', '91.7', '']
]);

const trades = `14:54 3.17 1 B 1|14:54 3.16 78 S 4|14:55 3.17 140 B 1|14:55 3.16 66 S 4|14:55 3.17 2 B 1|14:55 3.17 200 B 1|14:55 3.17 17 B 1|14:55 3.17 11 B 1|14:55 3.17 8 B 1|14:55 3.17 14 B 2|14:55 3.16 58 S 4|14:56 3.16 1 S 2|14:56 3.17 3 B 1|14:56 3.17 20 B 1|14:56 3.16 25 S 2|14:56 3.17 2 B 1|14:56 3.16 259 S 10|14:56 3.16 10 B 1|14:56 3.16 10 B 1|14:56 3.16 50 B 1|14:56 3.16 2 B 1|14:56 3.16 25 B 1|14:56 3.16 6 B 2|14:56 3.16 10 B 1|14:56 3.16 30 B 1|15:00 3.16 1105  32`;
byId('trades').innerHTML = trades.split('|').map(t => {
  const [time, price, size, side, n] = t.split(' ');
  return `<tr><td>${time}</td><td>${price}</td><td class="${side ? '' : 'purple'}">${size}</td><td class="${side}">${side}</td><td>${n}</td></tr>`;
}).join('');
```
